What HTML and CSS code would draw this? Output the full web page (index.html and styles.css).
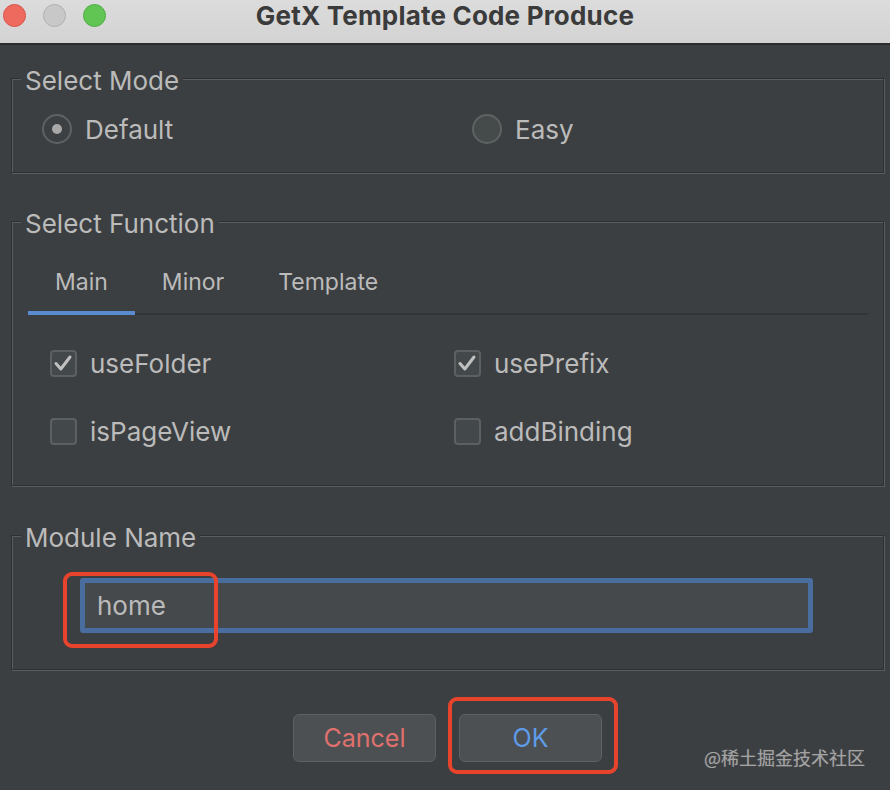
FILE: index.html
```html
<!DOCTYPE html>
<html lang="en">
<head>
<meta charset="utf-8">
<title>GetX Template Code Produce</title>
<link rel="stylesheet" href="styles.css">
</head>
<body>
<div class="window">
  <header class="titlebar">
    <div class="lights">
      <span class="light red"></span>
      <span class="light gray"></span>
      <span class="light green"></span>
    </div>
    <div class="title">GetX Template Code Produce</div>
    <div></div>
  </header>

  <main class="content">
    <section class="group group-mode">
      <div class="legend">Select Mode</div>
      <div class="radios">
        <label class="radio checked"><span class="dot"></span>Default</label>
        <label class="radio"><span class="dot"></span>Easy</label>
      </div>
    </section>

    <section class="group group-func">
      <div class="legend">Select Function</div>
      <nav class="tabs">
        <span class="tab active">Main</span>
        <span class="tab">Minor</span>
        <span class="tab">Template</span>
      </nav>
      <div class="checks">
        <label class="check"><span class="box on"><svg viewBox="0 0 27 27" width="27" height="27"><path d="M6 13.5 L10.8 19 L20 7" fill="none" stroke="#c0c0c0" stroke-width="3" stroke-linecap="round" stroke-linejoin="round"/></svg></span>useFolder</label>
        <label class="check"><span class="box on"><svg viewBox="0 0 27 27" width="27" height="27"><path d="M6 13.5 L10.8 19 L20 7" fill="none" stroke="#c0c0c0" stroke-width="3" stroke-linecap="round" stroke-linejoin="round"/></svg></span>usePrefix</label>
        <label class="check"><span class="box"></span>isPageView</label>
        <label class="check"><span class="box"></span>addBinding</label>
      </div>
    </section>

    <section class="group group-module">
      <div class="legend">Module Name</div>
      <div class="field">
        <div class="input">home</div>
        <span class="mark mark-input"></span>
      </div>
    </section>

    <div class="actions">
      <button class="btn cancel">Cancel</button>
      <button class="btn ok">OK<span class="mark mark-ok"></span></button>
    </div>
  </main>

  <div class="watermark">@稀土掘金技术社区</div>
</div>
</body>
</html>
```

FILE: styles.css
```css
* { box-sizing: border-box; }

html, body {
  margin: 0;
  padding: 0;
  background: #3c3f41;
}

body {
  font-family: Inter, "Noto Sans", "Noto Sans CJK SC", sans-serif;
  color: #bbbbbb;
}

.window {
  position: relative;
  width: 890px;
  height: 790px;
  background: #3c3f41;
  overflow: hidden;
}

/* Title bar */
.titlebar {
  height: 45px;
  display: grid;
  grid-template-columns: 1fr auto 1fr;
  align-items: center;
  background: linear-gradient(#dcdcdc, #d3d3d3);
  border-bottom: 2px solid #2b2c2d;
}

.lights {
  display: flex;
  gap: 17px;
  padding-left: 3px;
  margin-top: -12px;
}

.light {
  width: 23px;
  height: 23px;
  border-radius: 50%;
  display: block;
}
.light.red { background: #ee6a5f; border: 1px solid #d8544a; }
.light.gray { background: #c8c8c9; border: 1px solid #b0b0b0; }
.light.green { background: #61c554; border: 1px solid #4fae43; }

.title {
  font-weight: 700;
  font-size: 26px;
  color: #3b3b3c;
  margin-top: -12px;
  letter-spacing: 0.2px;
}

/* Content */
.content {
  padding: 0 6px 0 11px;
}

.group {
  border: 1px solid #2e3032;
  box-shadow: inset 1px 1px 0 #5a5c5e, 1px 1px 0 #5a5c5e;
}

.group-mode { margin-top: 33px; padding-bottom: 28px; }
.group-func { margin-top: 48px; padding-bottom: 40px; }
.group-module { margin-top: 49px; padding-bottom: 36px; }

.legend {
  display: table;
  margin: -12px 0 0 9px;
  padding: 0 4px;
  height: 28px;
  line-height: 28px;
  font-size: 26px;
  background: #3c3f41;
  color: #bbbbbb;
}

/* Radios */
.radios {
  display: grid;
  grid-template-columns: 430px 1fr;
  padding-left: 30px;
  margin-top: 19px;
}

.radio {
  display: flex;
  align-items: center;
  gap: 13px;
  height: 30px;
  font-size: 26px;
  color: #bbbbbb;
}

.dot {
  width: 30px;
  height: 30px;
  border-radius: 50%;
  border: 2px solid #5f6263;
  background: #454a4a;
  display: flex;
  align-items: center;
  justify-content: center;
}

.radio.checked .dot { background: #3d4042; }
.radio.checked .dot::after {
  content: "";
  width: 10px;
  height: 10px;
  border-radius: 50%;
  background: #a8a8a8;
}

/* Tabs */
.tabs {
  display: flex;
  margin: 15px 15px 0 16px;
  border-bottom: 2px solid #323436;
}

.tab {
  height: 62px;
  padding: 0 27px;
  display: flex;
  align-items: center;
  font-size: 23px;
  color: #bbbbbb;
  border-bottom: 4px solid transparent;
  margin-bottom: -2px;
}

.tab.active { border-bottom-color: #5a8ad0; }

/* Checkboxes */
.checks {
  display: grid;
  grid-template-columns: 404px 1fr;
  row-gap: 41px;
  padding-left: 38px;
  margin-top: 35px;
}

.check {
  display: flex;
  align-items: center;
  gap: 13px;
  height: 27px;
  font-size: 26px;
  color: #bbbbbb;
}

.box {
  width: 27px;
  height: 27px;
  border-radius: 4px;
  border: 2px solid #5d6061;
  background: #43494a;
  display: flex;
  align-items: center;
  justify-content: center;
  overflow: hidden;
}
.box svg { flex: none; }

/* Module input */
.field {
  position: relative;
  margin: 26px 0 0 68px;
  width: 733px;
}

.input {
  height: 55px;
  border: 5px solid #4a6da0;
  border-radius: 3px;
  background: #46494b;
  padding-left: 12px;
  line-height: 45px;
  font-size: 26px;
  color: #bbbbbb;
}

.mark {
  position: absolute;
  border: 4px solid #e8432d;
  border-radius: 9px;
  pointer-events: none;
}

.mark-input {
  left: -17px;
  top: -6px;
  width: 155px;
  height: 76px;
}

/* Buttons */
.actions {
  display: flex;
  justify-content: center;
  gap: 23px;
  margin-top: 44px;
}

.btn {
  position: relative;
  width: 143px;
  height: 48px;
  border: 1px solid #5e6163;
  border-radius: 6px;
  background: #4c5052;
  font-family: Inter, "Noto Sans", sans-serif;
  font-size: 25px;
  padding: 0;
}

.btn.cancel { color: #e0706e; }
.btn.ok { color: #5e9be9; }

.mark-ok {
  left: -12px;
  top: -18px;
  width: 170px;
  height: 77px;
}

.watermark {
  position: absolute;
  right: 25px;
  top: 744px;
  font-family: "Noto Sans CJK SC", "Noto Sans", sans-serif;
  font-size: 18px;
  color: #a3a3a3;
  text-shadow: 0 0 1px rgba(255, 255, 255, 0.25);
}
```
